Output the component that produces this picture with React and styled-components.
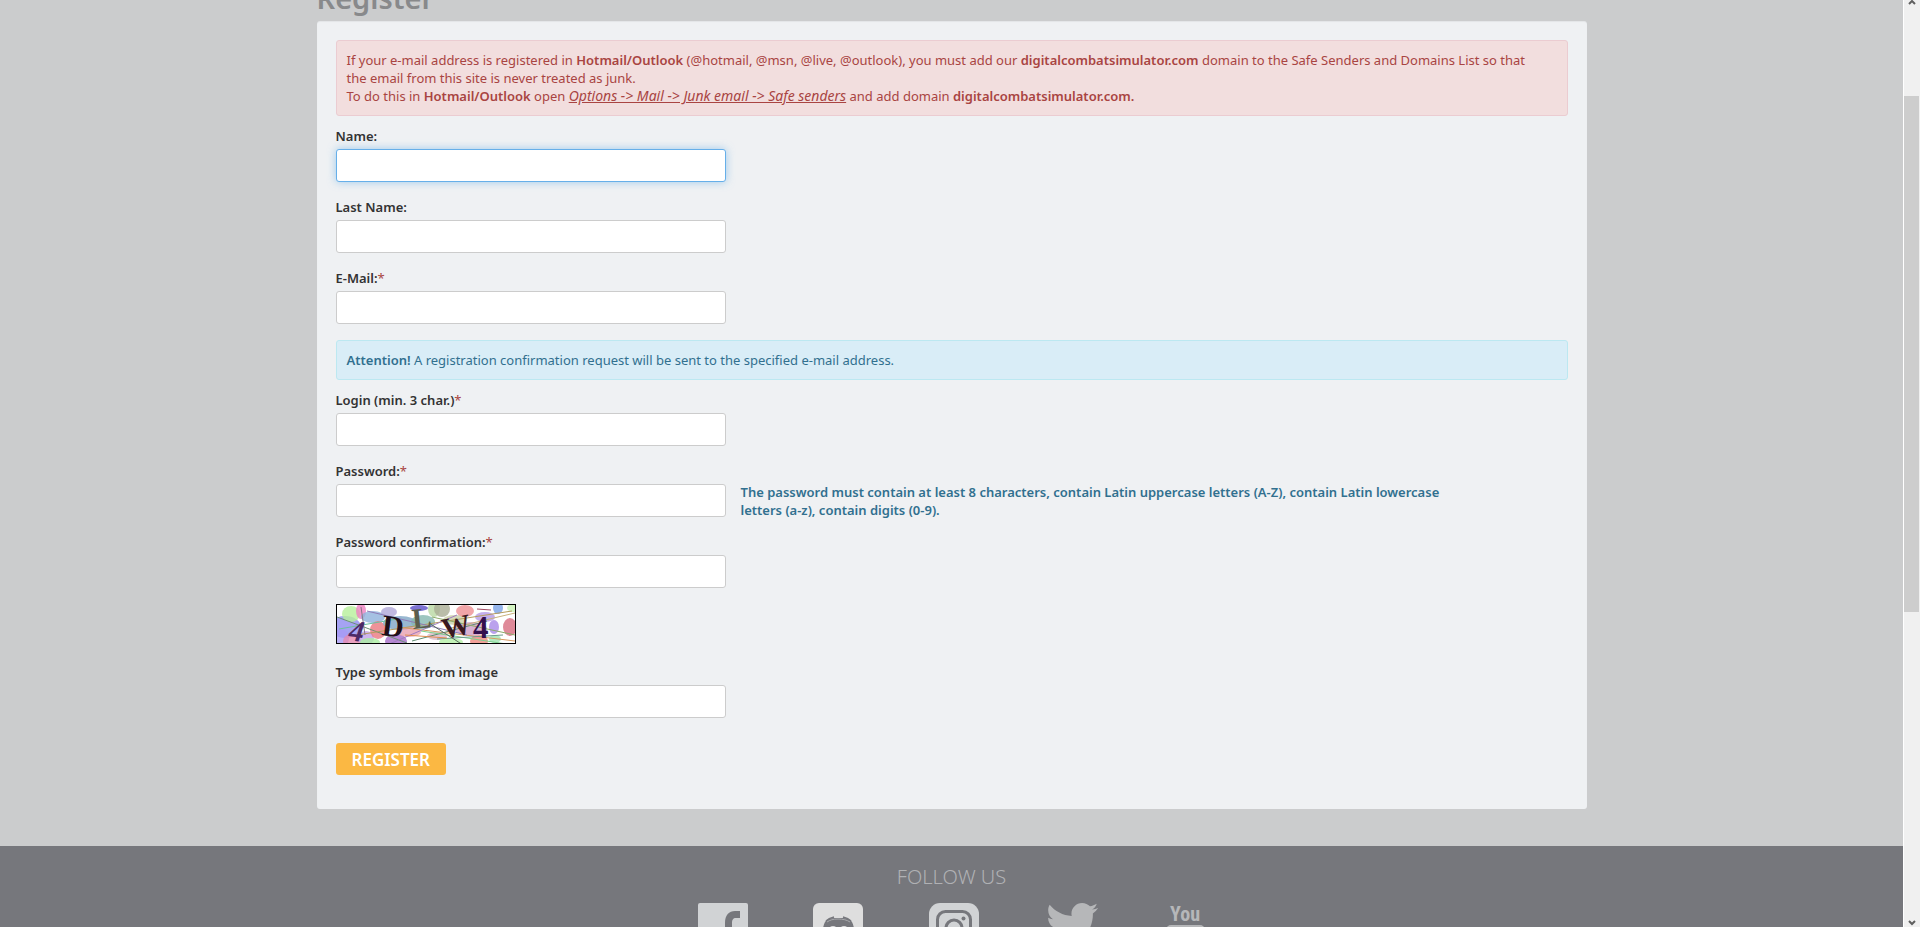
import React from "react";
import styled, { createGlobalStyle, css } from "styled-components";

const blobs = [
  [8, 22, 16, 11, "#8f8cf0"],
  [14, 9, 9, 8, "#b6f09a"],
  [24, 6, 5, 8, "#ee7fc0"],
  [4, 33, 8, 9, "#a79af5"],
  [15, 36, 9, 7, "#e58ab0"],
  [29, 33, 8, 7, "#c3a3ea"],
  [36, 12, 12, 6, "#8fb2dc"],
  [41, 25, 8, 9, "#ea7880"],
  [33, 37, 10, 4, "#a9eea0"],
  [52, 7, 8, 5, "#b0a8d8"],
  [59, 36, 11, 7, "#a56cc8"],
  [63, 18, 17, 7, "#7fa6c6"],
  [72, 27, 12, 5, "#e9a0b0"],
  [82, 3, 9, 3, "#5c50c8"],
  [86, 17, 12, 7, "#86b8b0"],
  [97, 4, 6, 8, "#b9d8a2"],
  [105, 4, 8, 8, "#a9ad94"],
  [100, 31, 10, 4, "#d9b8c8"],
  [118, 15, 12, 5, "#c9d0a8"],
  [128, 6, 9, 6, "#ee8f92"],
  [134, 24, 16, 7, "#cf9fc8"],
  [142, 36, 9, 6, "#ef8a80"],
  [148, 12, 10, 5, "#b59ae6"],
  [157, 22, 5, 7, "#a98ae8"],
  [161, 3, 5, 6, "#7aa2e6"],
  [158, 34, 6, 4, "#9fe4b0"],
  [173, 22, 7, 9, "#d76d80"],
  [114, 37, 12, 4, "#b4f0a6"],
  [176, 3, 6, 4, "#c9f2b4"],
];

const strokes = [
  [0, 12, 70, 38, "#6b8f76"],
  [20, 30, 175, 6, "#b59c5c"],
  [60, 22, 178, 36, "#d69a60"],
  [75, 36, 150, 16, "#5f8c70"],
  [30, 6, 130, 30, "#8f7cb8"],
  [95, 12, 178, 30, "#8cab6a"],
  [110, 24, 178, 8, "#c8b27c"],
  [84, 26, 176, 40, "#7ccf8c"],
  [50, 40, 120, 10, "#a07cc0"],
  [100, 34, 166, 30, "#6f9a90"],
  [24, 2, 28, 30, "#8a7888"],
  [140, 4, 154, 5, "#a04860"],
  [68, 30, 110, 33, "#e08c50"],
  [2, 24, 60, 14, "#6cc0a0"],
  [92, 18, 126, 40, "#586c60"],
];

const letters = [
  ["4", 11, 35, 30, 8, "#4c2a66", "italic"],
  ["D", 44, 30, 30, 7, "#1f1018", "normal"],
  ["L", 76, 24, 29, -6, "#5b5e4c", "normal"],
  ["W", 107, 34, 29, -12, "#3a1820", "normal"],
  ["4", 136, 33, 31, 0, "#34104e", "normal"],
];

const Captcha = () => (
  <CaptchaImage viewBox="0 0 178 38" role="img" aria-label="captcha">
    <rect width="178" height="38" fill="#fff" />
    {blobs.map(([cx, cy, rx, ry, fill], i) => (
      <ellipse key={i} cx={cx} cy={cy} rx={rx} ry={ry} fill={fill} opacity="0.8" />
    ))}
    {strokes.map(([x1, y1, x2, y2, stroke], i) => (
      <line key={i} x1={x1} y1={y1} x2={x2} y2={y2} stroke={stroke} />
    ))}
    {letters.map(([char, x, y, size, angle, fill, fontStyle], i) => (
      <text
        key={i}
        x={x}
        y={y}
        fill={fill}
        fontFamily="Liberation Serif, serif"
        fontWeight="bold"
        fontStyle={fontStyle}
        fontSize={size}
        transform={`rotate(${angle} ${x} ${y})`}
      >
        {char}
      </text>
    ))}
  </CaptchaImage>
);

const Facebook = () => (
  <SocialIcon viewBox="0 0 50 50">
    <rect width="50" height="50" rx="2" fill="#d1d3d5" />
    <path
      d="M27 50V31h-7v-7h7v-4c0-8 4-12 10-12h5v7h-4c-3 0-4 2-4 5v4h8l-1 7h-7v19z"
      fill="#76777c"
    />
  </SocialIcon>
);

const Discord = () => (
  <SocialIcon viewBox="0 0 50 50">
    <rect width="50" height="50" rx="6" fill="#dedede" />
    <path
      d="M9 37c0-8 1-14 3-18 2-3 5-4 9-4h9c4 0 7 1 9 4 2 4 3 10 3 18-3 3-6 4-9 4l-2-3H20l-2 3c-3 0-6-1-9-4z"
      fill="#76777c"
    />
    <path
      d="M13 18c2-2 4-3 8-4M38 18c-2-2-4-3-8-4"
      stroke="#76777c"
      strokeWidth="1.5"
      fill="none"
    />
    <path
      d="M14 19c3-2 6-3 11-3s9 1 12 3"
      stroke="#a9aaad"
      fill="none"
    />
    <circle cx="20" cy="27" r="4" fill="#dedede" />
    <circle cx="31" cy="27" r="4" fill="#dedede" />
  </SocialIcon>
);

const Instagram = () => (
  <SocialIcon viewBox="0 0 50 50">
    <rect x="1" width="50" height="50" rx="11" fill="#d1d3d5" />
    <rect
      x="9.5"
      y="8.5"
      width="33"
      height="33"
      rx="8"
      fill="none"
      stroke="#76777c"
      strokeWidth="3"
    />
    <circle cx="26" cy="25" r="8" fill="none" stroke="#76777c" strokeWidth="3" />
    <circle cx="35.5" cy="15.5" r="2" fill="#76777c" />
  </SocialIcon>
);

const Twitter = () => (
  <SocialIcon viewBox="0 0 50 50">
    <path
      transform="translate(3 -5) scale(0.102)"
      d="M459.37 151.716c.325 4.548.325 9.097.325 13.645 0 138.72-105.583 298.558-298.558 298.558-59.452 0-114.68-17.219-161.137-47.106 8.447.974 16.568 1.299 25.34 1.299 49.055 0 94.213-16.568 130.274-44.832-46.132-.975-84.792-31.188-98.112-72.772 6.498.974 12.995 1.624 19.818 1.624 9.421 0 18.843-1.3 27.614-3.573-48.081-9.747-84.143-51.98-84.143-102.985v-1.299c13.969 7.797 30.214 12.67 47.431 13.319-28.264-18.843-46.781-51.005-46.781-87.391 0-19.492 5.197-37.36 14.294-52.954 51.655 63.675 129.3 105.258 216.365 109.807-1.624-7.797-2.599-15.918-2.599-24.04 0-57.828 46.782-104.934 104.934-104.934 30.213 0 57.502 12.67 76.67 33.137 23.715-4.548 46.456-13.32 66.599-25.34-7.798 24.366-24.366 44.833-46.132 57.827 21.117-2.273 41.584-8.122 60.426-16.243-14.292 20.791-32.161 39.308-52.628 54.253z"
      fill="#b6b7b9"
    />
  </SocialIcon>
);

const Youtube = () => (
  <SocialIcon viewBox="0 0 50 50">
    <text
      x="27"
      y="18"
      textAnchor="middle"
      fontFamily="Liberation Sans Narrow, Roboto Condensed, Roboto, sans-serif"
      fontWeight="bold"
      fontSize="20"
      fill="#b6b7b9"
    >
      You
    </text>
    <rect x="8" y="22" width="39" height="28" rx="5" fill="#b6b7b9" />
    <path d="M22 29l12 7-12 7z" fill="#76777c" />
  </SocialIcon>
);

const social = [
  { name: "Facebook", Icon: Facebook },
  { name: "Discord", Icon: Discord },
  { name: "Instagram", Icon: Instagram },
  { name: "Twitter", Icon: Twitter },
  { name: "YouTube", Icon: Youtube },
];

const Field = ({ id, label, required, hint, active, type = "text" }) => (
  <FieldGroup>
    <Label htmlFor={id}>
      {label}
      {required && <Star>*</Star>}
    </Label>
    <FieldRow>
      <Input id={id} name={id} type={type} $active={active} />
      {hint && <Hint>{hint}</Hint>}
    </FieldRow>
  </FieldGroup>
);

const App = () => (
  <Viewport>
    <GlobalStyle />
    <Page>
      <Container>
        <TitleBar>
          <Title>Register</Title>
        </TitleBar>
        <Panel>
          <Alert $kind="danger">
            If your e-mail address is registered in <b>Hotmail/Outlook</b>{" "}
            (@hotmail, @msn, @live, @outlook), you must add our{" "}
            <b>digitalcombatsimulator.com</b> domain to the Safe Senders and
            Domains List so that the email from this site is never treated as
            junk.
            <br />
            To do this in <b>Hotmail/Outlook</b> open{" "}
            <Steps>
              Options -&gt; Mail -&gt; Junk email -&gt; Safe senders
            </Steps>{" "}
            and add domain <b>digitalcombatsimulator.com.</b>
          </Alert>
          <Field id="name" label="Name:" active />
          <Field id="last-name" label="Last Name:" />
          <Field id="email" label="E-Mail:" type="email" required />
          <Alert $kind="info">
            <b>Attention!</b> A registration confirmation request will be sent
            to the specified e-mail address.
          </Alert>
          <Field id="login" label="Login (min. 3 char.)" required />
          <Field
            id="password"
            label="Password:"
            type="password"
            required
            hint="The password must contain at least 8 characters, contain Latin uppercase letters (A-Z), contain Latin lowercase letters (a-z), contain digits (0-9)."
          />
          <Field
            id="confirm"
            label="Password confirmation:"
            type="password"
            required
          />
          <Captcha />
          <Field id="captcha" label="Type symbols from image" />
          <RegisterButton type="submit">REGISTER</RegisterButton>
        </Panel>
      </Container>
      <Footer>
        <FooterTitle>FOLLOW US</FooterTitle>
        <SocialList>
          {social.map(({ name, Icon }) => (
            <SocialLink key={name} href="#" aria-label={name}>
              <Icon />
            </SocialLink>
          ))}
        </SocialList>
      </Footer>
    </Page>
    <Scrollbar aria-hidden="true">
      <Arrow viewBox="0 0 16 8">
        <path d="M5 4l3-3 3 3" />
      </Arrow>
      <Track $grow={88} />
      <Thumb />
      <Track $grow={307} />
      <Arrow viewBox="0 0 16 8">
        <path d="M5 2l3 3 3-3" />
      </Arrow>
    </Scrollbar>
  </Viewport>
);

export default App;

const GlobalStyle = createGlobalStyle`
  *, *::before, *::after {
    box-sizing: border-box;
  }

  body {
    margin: 0;
    background: #cbcccd;
    color: #333;
    font-family: "Noto Sans", "Open Sans", sans-serif;
    font-size: 13px;
    line-height: 18px;
  }

  b {
    font-weight: 600;
  }
`;

const Viewport = styled.div`
  display: flex;
  height: 100vh;
  overflow: hidden;
`;

const Page = styled.div`
  flex: 1;
  min-width: 0;
`;

const Container = styled.main`
  max-width: 1300px;
  margin: 0 auto;
  padding: 0 15px 37px;
`;

const TitleBar = styled.header`
  display: flex;
  align-items: flex-end;
  height: 21px;
  padding-bottom: 7px;
`;

const Title = styled.h1`
  margin: 0;
  color: #88898b;
  font-size: 29px;
  font-weight: 600;
  line-height: 32px;
`;

const Panel = styled.form`
  padding: 19px 19px 34px;
  border-radius: 3px;
  background: #eff1f3;
  box-shadow: inset 0 1px 1px rgba(0, 0, 0, 0.05);
`;

const alertColors = {
  danger: css`
    color: #a94442;
    background: #f2dede;
    border-color: #ebccd1;
  `,
  info: css`
    color: #31708f;
    background: #d9edf7;
    border-color: #bce8f1;
  `,
};

const Alert = styled.div`
  margin-bottom: 11px;
  padding: 10px 30px 10px 10px;
  border: 1px solid;
  border-radius: 3px;
  ${(props) => alertColors[props.$kind]}
`;

const Steps = styled.em`
  font-size: 14px;
  line-height: 1;
  text-decoration: underline;
`;

const FieldGroup = styled.div`
  display: flex;
  flex-direction: column;
  align-items: flex-start;
  gap: 3px;
  margin-bottom: 16px;
`;

const FieldRow = styled.div`
  display: flex;
  align-items: center;
  gap: 15px;
  height: 33px;
`;

const Label = styled.label`
  font-weight: 600;
  line-height: 19px;
`;

const Star = styled.span`
  color: #a94442;
  font-weight: 400;
`;

const Input = styled.input`
  flex: none;
  width: 390px;
  height: 33px;
  padding: 6px 10px;
  border: 1px solid #ccc;
  border-radius: 3px;
  background: #fff;
  color: #555;
  font: inherit;
  outline: none;

  ${(props) =>
    props.$active &&
    css`
      border-color: #66afe9;
      box-shadow: 0 0 8px rgba(102, 175, 233, 0.6);
    `}
`;

const Hint = styled.p`
  max-width: 715px;
  margin: 0;
  color: #31708f;
  font-weight: 600;
`;

const CaptchaImage = styled.svg`
  display: block;
  width: 180px;
  height: 40px;
  margin-bottom: 19px;
  border: 1px solid #000;
`;

const RegisterButton = styled.button`
  display: block;
  height: 32px;
  margin-top: 25px;
  padding: 2px 16px 0;
  border: 0;
  border-radius: 3px;
  background: #fbb843;
  color: #fff;
  font-family: inherit;
  font-size: 17px;
  font-weight: 600;
  line-height: 30px;
`;

const Footer = styled.footer`
  padding: 18px 0 30px;
  background: #76777c;
  text-align: center;
`;

const FooterTitle = styled.h2`
  margin: 0 0 13px;
  color: #b0b1b4;
  font-size: 20px;
  font-weight: 300;
  line-height: 26px;
`;

const SocialList = styled.nav`
  display: flex;
  justify-content: center;
  gap: 65px;
  padding-left: 3px;
`;

const SocialLink = styled.a`
  display: block;
`;

const SocialIcon = styled.svg`
  display: block;
  width: 50px;
  height: 50px;
  overflow: visible;
`;

const Scrollbar = styled.div`
  display: flex;
  flex-direction: column;
  width: 17px;
  border-left: 1px solid #fff;
  background: #f0f0f0;
`;

const Track = styled.div`
  flex: ${(props) => props.$grow};
`;

const Thumb = styled.div`
  flex: 516;
  margin-right: 1px;
  background: #cdcdcd;
`;

const Arrow = styled.svg`
  display: block;
  width: 16px;
  height: 8px;
  fill: none;
  stroke: #606060;
  stroke-width: 2;
`;
